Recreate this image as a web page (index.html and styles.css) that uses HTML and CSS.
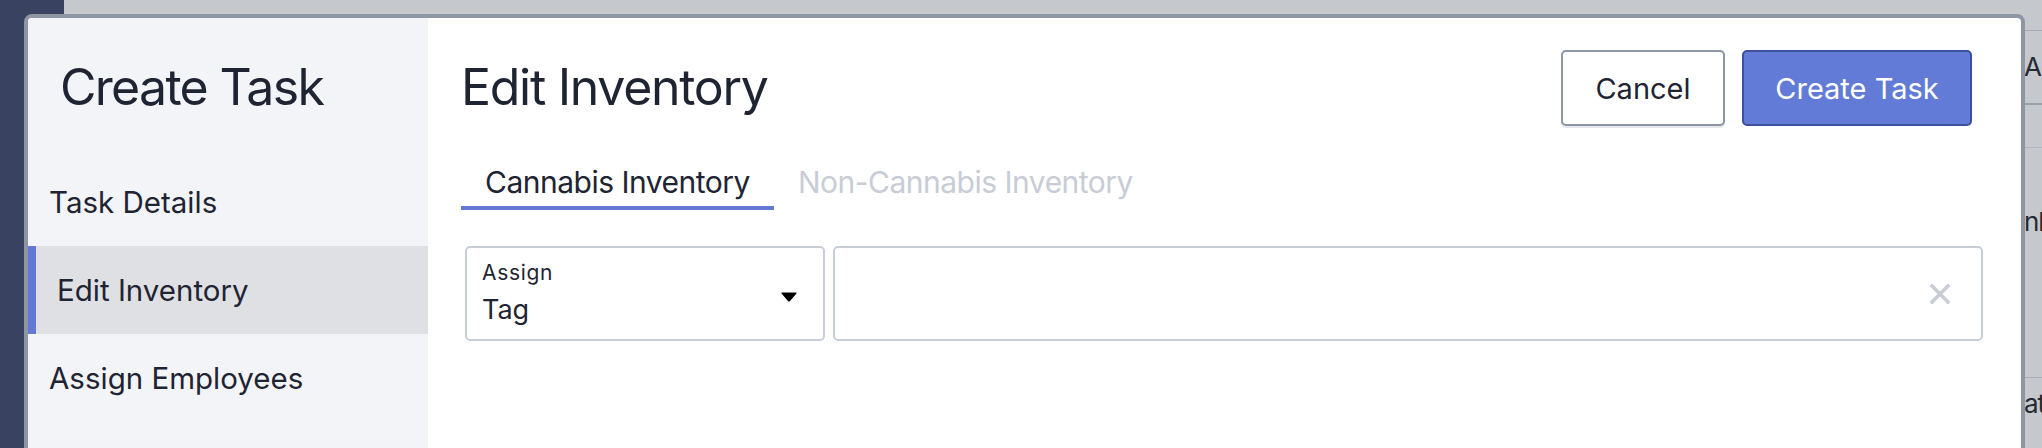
FILE: index.html
```html
<!DOCTYPE html>
<html lang="en">
<head>
    <meta charset="UTF-8">
    <meta name="viewport" content="width=device-width, initial-scale=1.0">
    <title>Create Task</title>
    <link rel="stylesheet" href="styles.css">
</head>
<body>

<!-- Page behind the modal -->
<div class="page">
    <nav class="side-nav"></nav>
    <div class="page-content">
        <div class="bg-table">
            <div class="bg-row row-top"></div>
            <div class="bg-row row-head">Actions</div>
            <div class="bg-row row-sub"></div>
            <div class="bg-row row-item">nlink</div>
            <div class="bg-row row-last">atch</div>
        </div>
    </div>
</div>

<!-- Create Task modal -->
<div class="modal">
    <aside class="modal-sidebar">
        <h1 class="modal-title">Create Task</h1>
        <ul class="steps">
            <li class="step">Task Details</li>
            <li class="step active">Edit Inventory</li>
            <li class="step">Assign Employees</li>
        </ul>
    </aside>

    <main class="modal-main">
        <div class="main-header">
            <h2 class="main-title">Edit Inventory</h2>
            <div class="actions">
                <button class="btn btn-cancel">Cancel</button>
                <button class="btn btn-primary">Create Task</button>
            </div>
        </div>

        <div class="tabs">
            <div class="tab active">Cannabis Inventory</div>
            <div class="tab">Non-Cannabis Inventory</div>
        </div>

        <div class="filter-row">
            <div class="select-box">
                <div class="select-text">
                    <div class="select-label">Assign</div>
                    <div class="select-value">Tag</div>
                </div>
                <svg class="caret" width="16" height="10" viewBox="0 0 16 10">
                    <path d="M1 1 L15 1 L8.6 8.6 Q8 9.3 7.4 8.6 Z" fill="#000" stroke="#000" stroke-width="1.2" stroke-linejoin="round"/>
                </svg>
            </div>
            <div class="search-box">
                <svg class="clear-icon" width="20" height="20" viewBox="0 0 20 20">
                    <path d="M2 2 L18 18 M18 2 L2 18" stroke="#c8ccd5" stroke-width="3.6" stroke-linecap="square"/>
                </svg>
            </div>
        </div>
    </main>
</div>

</body>
</html>
```

FILE: styles.css
```css
body {
    margin: 0;
    height: 448px;
    overflow: hidden;
    font-family: Inter, "Noto Sans", sans-serif;
    background-color: #c5c8cc;
    color: #1f2433;
}
.page {
    display: flex;
    height: 448px;
}
.side-nav {
    width: 64px;
    background-color: #3a4262;
}
.page-content {
    flex: 1;
    display: flex;
    justify-content: flex-end;
}
.bg-table {
    width: 19px;
    overflow: hidden;
    white-space: nowrap;
    font-size: 26px;
    letter-spacing: -1px;
    color: #262a35;
}
.bg-row {
    box-sizing: border-box;
    padding-left: 1px;
    line-height: 1;
}
.row-top {
    height: 31px;
    border-bottom: 1px solid #a6abb3;
}
.row-head {
    height: 74px;
    padding-top: 23px;
    border-bottom: 2px solid #9aa0a8;
}
.row-sub {
    height: 43px;
    border-bottom: 1px solid #b4b8be;
}
.row-item {
    height: 230px;
    padding-top: 61px;
    border-bottom: 1px solid #a9aeb5;
}
.row-last {
    padding-top: 13px;
}

/* Modal */
.modal {
    position: absolute;
    top: 14px;
    left: 24px;
    width: 2001px;
    bottom: -20px;
    box-sizing: border-box;
    border: 4px solid #8e96a4;
    border-radius: 8px 8px 0 0;
    background-color: #fff;
    overflow: hidden;
    display: flex;
}
.modal-sidebar {
    width: 400px;
    flex-shrink: 0;
    background-color: #f3f4f8;
}
.modal-title {
    margin: 44px 0 0 32px;
    font-size: 50px;
    font-weight: 400;
    line-height: 1;
    letter-spacing: -1.7px;
}
.steps {
    list-style: none;
    margin: 46px 0 0;
    padding: 0;
}
.step {
    height: 88px;
    display: flex;
    align-items: center;
    padding-left: 21px;
    font-size: 29.5px;
}
.step.active {
    background-color: #dfe0e4;
    border-left: 8px solid #6279d3;
}

.modal-main {
    flex: 1;
    padding: 32px 38px 0 33px;
}
.main-header {
    display: flex;
    justify-content: space-between;
    align-items: flex-start;
    padding-right: 11px;
}
.main-title {
    margin: 12px 0 0;
    font-size: 50px;
    font-weight: 400;
    line-height: 1;
    letter-spacing: -1.3px;
}
.actions {
    display: flex;
    gap: 17px;
}
.btn {
    height: 76px;
    padding: 0;
    font-family: Inter, "Noto Sans", sans-serif;
    font-size: 29px;
    white-space: nowrap;
    border-radius: 5px;
    cursor: pointer;
}
.btn-cancel {
    width: 164px;
    background-color: #fff;
    color: #1f2433;
    border: 2px solid #8d96a5;
    box-shadow: 0 2px 0 #e4e6eb;
}
.btn-primary {
    width: 230px;
    background-color: #627bd6;
    color: #fff;
    border: 2px solid #3e4fa1;
}

.tabs {
    display: flex;
    margin-top: 41px;
}
.tab {
    padding: 0 24px 9px;
    font-size: 30px;
    line-height: 1;
    letter-spacing: -0.5px;
    color: #c8ccd6;
    border-bottom: 4px solid transparent;
}
.tab.active {
    color: #1f2433;
    border-bottom-color: #6279d3;
}

.filter-row {
    display: flex;
    gap: 8px;
    margin: 36px 0 0 4px;
}
.select-box,
.search-box {
    height: 95px;
    box-sizing: border-box;
    border: 2px solid #c9cdd6;
    border-radius: 5px;
    display: flex;
}
.select-box {
    width: 360px;
    padding: 14px 26px 0 15px;
    justify-content: space-between;
}
.select-label {
    font-size: 21px;
    line-height: 1;
    letter-spacing: 0.7px;
}
.select-value {
    margin-top: 13px;
    font-size: 27px;
    line-height: 1;
}
.caret {
    margin-top: 30px;
}
.search-box {
    flex: 1;
    justify-content: flex-end;
    align-items: center;
    padding-right: 31px;
}
```
